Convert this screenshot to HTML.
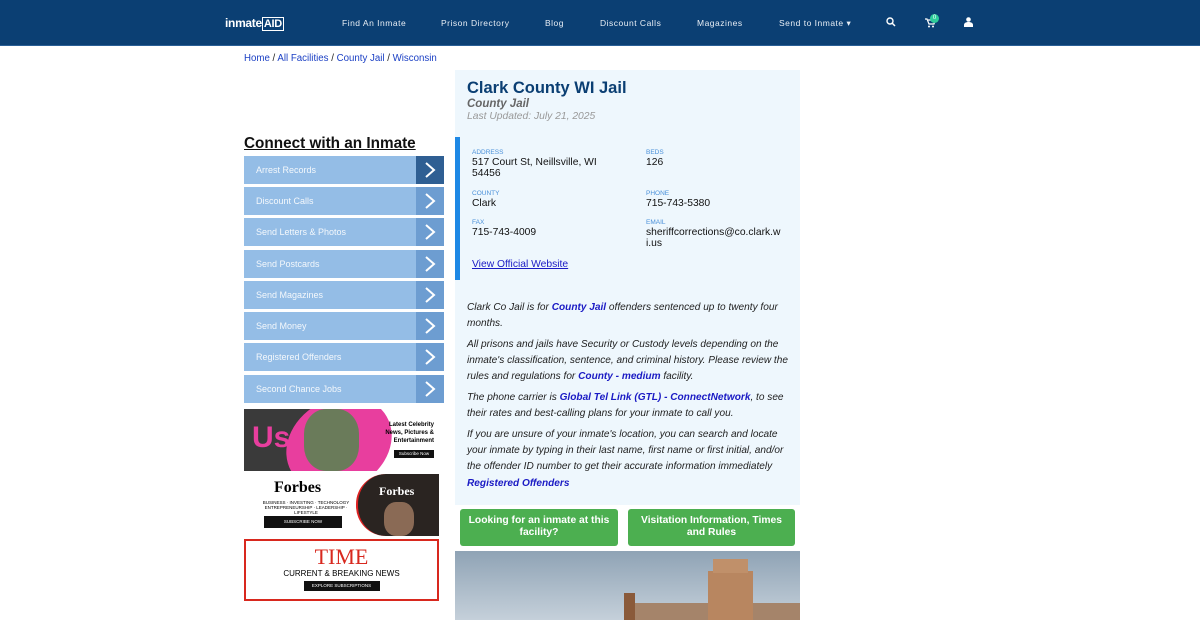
<!DOCTYPE html>
<html><head><meta charset="utf-8"><style>
*{margin:0;padding:0;box-sizing:border-box}
body{width:1200px;height:620px;overflow:hidden;background:#fff;font-family:"Liberation Sans",sans-serif;position:relative}
.hdr{position:absolute;left:0;top:0;width:1200px;height:46px;background:#0b3f73;border-bottom:1px solid #2a5f96}
.nav{position:absolute;top:18px;color:#e8eef5;font-size:8.5px;letter-spacing:.5px}
.abs{position:absolute}
.bc{left:244px;top:53px;font-size:9.7px;color:#222}
.bc a{color:#1a3fc4;text-decoration:none}
.conn{left:244px;top:135px;font-size:15.3px;font-weight:bold;text-decoration:underline;color:#111}
.item{position:absolute;left:244px;width:200px;height:28px;background:#94bde6;color:#f4f8fc;font-size:9px;line-height:28px;padding-left:12px}
.item .ar{position:absolute;right:0;top:0;width:28px;height:28px;background:#6d9dd1}
.item .ar svg{position:absolute;left:7px;top:6px}
.panel{left:455px;top:70px;width:345px;height:435px;background:#eef7fd}
.lbl{position:absolute;font-size:6.5px;color:#4a90d9}
.val{position:absolute;font-size:10.3px;color:#111;line-height:11px}
.p{position:absolute;left:467px;width:322px;font-size:10.1px;font-style:italic;color:#222;line-height:16.2px}
.p b{color:#1a1ac4;font-style:italic}
.btn{position:absolute;top:509px;height:37px;background:#4caf50;border-radius:3px;color:#fff;font-weight:bold;font-size:10.3px;text-align:center;line-height:12px;padding:6px 4px 0}
</style></head><body>
<div class="hdr">
 <div class="abs" style="left:225px;top:16px;color:#fff;font-size:12px;font-weight:bold;letter-spacing:-.3px">inmate<span style="border:1px solid #fff;padding:0 1px;font-size:11px">AID</span></div>
 <div class="nav" style="left:342px">Find An Inmate</div>
 <div class="nav" style="left:441px">Prison Directory</div>
 <div class="nav" style="left:545px">Blog</div>
 <div class="nav" style="left:600px">Discount Calls</div>
 <div class="nav" style="left:697px">Magazines</div>
 <div class="nav" style="left:779px">Send to Inmate ▾</div>
 <svg class="abs" style="left:886px;top:17px" width="10" height="10"><circle cx="4" cy="4" r="3" stroke="#fff" stroke-width="1.4" fill="none"/><line x1="6" y1="6" x2="9" y2="9" stroke="#fff" stroke-width="1.5"/></svg>
 <svg class="abs" style="left:925px;top:18px" width="10" height="10"><path d="M0 1h2l2 5h5l1-4H3" stroke="#fff" fill="none" stroke-width="1.2"/><circle cx="4" cy="8.5" r="1" fill="#fff"/><circle cx="8" cy="8.5" r="1" fill="#fff"/></svg>
 <div class="abs" style="left:930px;top:14px;width:9px;height:9px;border-radius:50%;background:#2ecc9a;color:#fff;font-size:6px;text-align:center;line-height:9px">0</div>
 <svg class="abs" style="left:964px;top:17px" width="9" height="10"><circle cx="4.5" cy="2.5" r="2.3" fill="#fff"/><path d="M0 10v-2c0-2 2-3 4.5-3S9 6 9 8v2z" fill="#fff"/></svg>
</div>
<div class="abs bc"><a>Home</a> / <a>All Facilities</a> / <a>County Jail</a> / <a>Wisconsin</a></div>
<div class="abs conn">Connect with an Inmate</div>
<div class="item" style="top:156px">Arrest Records<div class="ar" style="background:#2f5f93"><svg width="14" height="16"><path d="M3 1l8 7-8 7" stroke="#fff" stroke-width="2" fill="none"/></svg></div></div>
<div class="item" style="top:187px">Discount Calls<div class="ar"><svg width="14" height="16"><path d="M3 1l8 7-8 7" stroke="#fff" stroke-width="2" fill="none"/></svg></div></div>
<div class="item" style="top:218px">Send Letters &amp; Photos<div class="ar"><svg width="14" height="16"><path d="M3 1l8 7-8 7" stroke="#fff" stroke-width="2" fill="none"/></svg></div></div>
<div class="item" style="top:250px">Send Postcards<div class="ar"><svg width="14" height="16"><path d="M3 1l8 7-8 7" stroke="#fff" stroke-width="2" fill="none"/></svg></div></div>
<div class="item" style="top:281px">Send Magazines<div class="ar"><svg width="14" height="16"><path d="M3 1l8 7-8 7" stroke="#fff" stroke-width="2" fill="none"/></svg></div></div>
<div class="item" style="top:312px">Send Money<div class="ar"><svg width="14" height="16"><path d="M3 1l8 7-8 7" stroke="#fff" stroke-width="2" fill="none"/></svg></div></div>
<div class="item" style="top:343px">Registered Offenders<div class="ar"><svg width="14" height="16"><path d="M3 1l8 7-8 7" stroke="#fff" stroke-width="2" fill="none"/></svg></div></div>
<div class="item" style="top:375px">Second Chance Jobs<div class="ar"><svg width="14" height="16"><path d="M3 1l8 7-8 7" stroke="#fff" stroke-width="2" fill="none"/></svg></div></div>
<div class="abs" style="left:244px;top:409px;width:195px;height:62px;background:#fff;overflow:hidden">
 <div class="abs" style="left:0;top:0;width:130px;height:62px;background:#3a3a3a"></div>
 <div class="abs" style="left:40px;top:-10px;width:110px;height:90px;border-radius:50%;background:#e83e9e;transform:rotate(-30deg)"></div>
 <div class="abs" style="left:60px;top:0;width:55px;height:62px;background:#6a7b5a;border-radius:40%"></div>
 <div class="abs" style="left:8px;top:12px;color:#e83e9e;font-size:30px;font-weight:bold">Us</div>
 <div class="abs" style="left:140px;top:12px;font-size:6px;font-weight:bold;text-align:right;width:50px;line-height:8px">Latest Celebrity News, Pictures &amp; Entertainment</div>
 <div class="abs" style="left:150px;top:41px;width:40px;height:8px;background:#111;color:#fff;font-size:4.5px;text-align:center;line-height:8px">Subscribe Now</div>
</div>
<div class="abs" style="left:244px;top:474px;width:195px;height:62px;background:#fff;overflow:hidden">
 <div class="abs" style="left:30px;top:5px;font-family:'Liberation Serif',serif;font-weight:bold;font-size:16px">Forbes</div>
 <div class="abs" style="left:12px;top:26px;font-size:4.5px;width:100px;text-align:center">BUSINESS · INVESTING · TECHNOLOGY ENTREPRENEURSHIP · LEADERSHIP · LIFESTYLE</div>
 <div class="abs" style="left:20px;top:42px;width:78px;height:12px;background:#111;color:#fff;font-size:4.5px;text-align:center;line-height:12px">SUBSCRIBE NOW</div>
 <div class="abs" style="left:112px;top:0;width:83px;height:62px;background:#2a2421;border-radius:30px 0 0 30px;border-left:2px solid #d22"></div>
 <div class="abs" style="left:135px;top:10px;color:#fff;font-family:'Liberation Serif',serif;font-weight:bold;font-size:12px">Forbes</div>
 <div class="abs" style="left:140px;top:28px;width:30px;height:34px;border-radius:40%;background:#8a6a55"></div>
</div>
<div class="abs" style="left:244px;top:539px;width:195px;height:62px;border:2px solid #d8281e;background:#fff;text-align:center">
 <div style="font-family:'Liberation Serif',serif;color:#d8281e;font-size:22px;line-height:24px;margin-top:4px">TIME</div>
 <div style="font-size:8px;line-height:9px">CURRENT &amp; BREAKING NEWS</div>
 <div style="margin:3px auto 0;width:76px;height:10px;background:#111;color:#fff;font-size:4.5px;line-height:10px">EXPLORE SUBSCRIPTIONS</div>
</div>
<div class="abs panel"></div>
<div class="abs" style="left:467px;top:79px;font-size:16.5px;font-weight:bold;color:#0b3f73">Clark County WI Jail</div>
<div class="abs" style="left:467px;top:98px;font-size:11.5px;font-weight:bold;font-style:italic;color:#666">County Jail</div>
<div class="abs" style="left:467px;top:111px;font-size:10.3px;font-style:italic;color:#999">Last Updated: July 21, 2025</div>
<div class="abs" style="left:455px;top:137px;width:5px;height:143px;background:#1e88e5"></div>
<div class="lbl" style="left:472px;top:149px">ADDRESS</div>
<div class="val" style="left:472px;top:157px;width:140px">517 Court St, Neillsville, WI 54456</div>
<div class="lbl" style="left:646px;top:149px">BEDS</div>
<div class="val" style="left:646px;top:157px">126</div>
<div class="lbl" style="left:472px;top:190px">COUNTY</div>
<div class="val" style="left:472px;top:198px">Clark</div>
<div class="lbl" style="left:646px;top:190px">PHONE</div>
<div class="val" style="left:646px;top:198px">715-743-5380</div>
<div class="lbl" style="left:472px;top:219px">FAX</div>
<div class="val" style="left:472px;top:227px">715-743-4009</div>
<div class="lbl" style="left:646px;top:219px">EMAIL</div>
<div class="val" style="left:646px;top:227px;width:135px;word-break:break-all">sheriffcorrections@co.clark.wi.us</div>
<div class="val" style="left:472px;top:259px;color:#1a1ac4;text-decoration:underline">View Official Website</div>
<div class="p" style="top:300px">Clark Co Jail is for <b>County Jail</b> offenders sentenced up to twenty four months.</div>
<div class="p" style="top:337px">All prisons and jails have Security or Custody levels depending on the inmate's classification, sentence, and criminal history. Please review the rules and regulations for <b>County - medium</b> facility.</div>
<div class="p" style="top:390px">The phone carrier is <b>Global Tel Link (GTL) - ConnectNetwork</b>, to see their rates and best-calling plans for your inmate to call you.</div>
<div class="p" style="top:427px">If you are unsure of your inmate's location, you can search and locate your inmate by typing in their last name, first name or first initial, and/or the offender ID number to get their accurate information immediately <b>Registered Offenders</b></div>
<div class="btn" style="left:460px;width:158px">Looking for an inmate at this facility?</div>
<div class="btn" style="left:628px;width:167px">Visitation Information, Times and Rules</div>
<div class="abs" style="left:455px;top:551px;width:345px;height:69px;background:linear-gradient(#8fa3b5,#c5d0da);overflow:hidden">
 <div class="abs" style="left:169px;top:42px;width:11px;height:30px;background:#8a5a3a"></div>
 <div class="abs" style="left:180px;top:52px;width:165px;height:20px;background:#a5846a"></div>
 <div class="abs" style="left:253px;top:20px;width:45px;height:50px;background:#b88660"></div>
 <div class="abs" style="left:258px;top:8px;width:35px;height:14px;background:#c0906a"></div>
</div>
</body></html>
